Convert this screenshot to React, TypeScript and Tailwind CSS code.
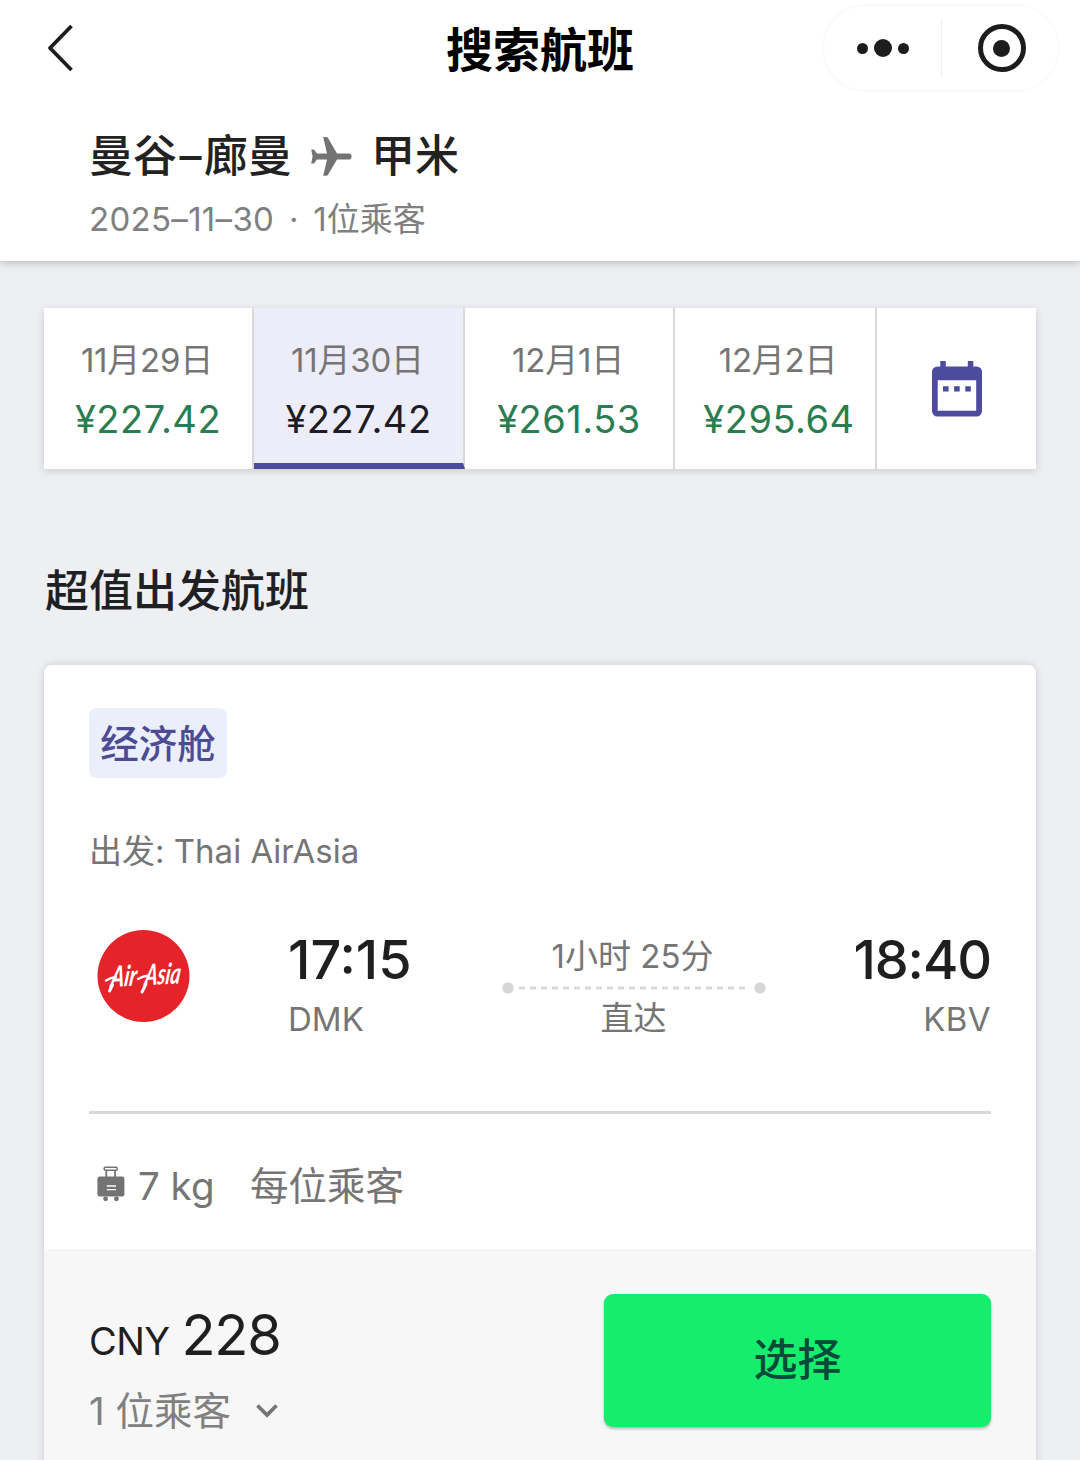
import clsx from "clsx"

const days = [
  { date: "11月29日", price: "¥227.42", width: "w-[210px]" },
  { date: "11月30日", price: "¥227.42", width: "w-[211px]", active: true },
  { date: "12月1日", price: "¥261.53", width: "w-[210px]" },
  { date: "12月2日", price: "¥295.64", width: "w-[202px] pl-2" },
]

function BackIcon() {
  return (
    <svg width="28" height="50" viewBox="0 0 28 50" fill="none" stroke="#1c1c1c" strokeWidth="3.8">
      <path d="M25.5 3 4 25l21.5 22" strokeLinejoin="round" />
    </svg>
  )
}

function PlaneIcon() {
  return (
    <svg width="41" height="39" viewBox="0 0 41 39" fill="#737373">
      <path d="M37.5 16.4H26L17 1Q16.4 0 15.3 0H12.2L16 16.4H6L3.4 13Q3 12.6 2.4 12.6H.2L1.6 19.5.2 26.6H2.4Q3 26.6 3.4 26.1L6 22.6H16L12.2 38.8H15.3Q16.4 38.8 17 37.8L26 22.6H37.5A3.1 3.1 0 0 0 37.5 16.4Z" />
    </svg>
  )
}

function CalendarIcon() {
  return (
    <svg width="50" height="56" viewBox="0 0 50 56" fill="#4c4b9d">
      <path
        fillRule="evenodd"
        d="M8.3 0h5.5v5.5h22V0h5.5v5.5h3.2a5.5 5.5 0 0 1 5.5 5.5v39a5.5 5.5 0 0 1-5.5 5.5h-39A5.5 5.5 0 0 1 0 50V11a5.5 5.5 0 0 1 5.5-5.5h2.8ZM5.7 19.3v30.5h38.5V19.3Z"
      />
      <path d="M11 25.3h5.6v5.2H11Zm11.1 0h5.6v5.2h-5.6Zm11.2 0h5.5v5.2h-5.5Z" />
    </svg>
  )
}

function LuggageIcon() {
  return (
    <svg width="28" height="36" viewBox="0 0 28 36" fill="#737373">
      <rect x="7.2" y="1.2" width="13" height="3" rx="1" fill="none" stroke="#737373" strokeWidth="1.5" />
      <path d="M9.3 4v7M18 4v7" stroke="#737373" strokeWidth="1.8" />
      <rect x="0.4" y="10.6" width="27" height="20" rx="2.4" />
      <path d="M9.8 20h9.2M9.8 23.6h9.2" stroke="#fff" strokeWidth="1.4" />
      <circle cx="8.6" cy="32.8" r="2.4" />
      <circle cx="19.4" cy="32.8" r="2.4" />
    </svg>
  )
}

function AirlineLogo() {
  return (
    <svg width="94" height="94" viewBox="0 0 94 94" className="shrink-0">
      <circle cx="46.5" cy="47" r="46" fill="#e5242a" />
      <g transform="translate(13 58) rotate(-3) skewX(-10)" fill="#fff" fontFamily="Lato" fontWeight="700" fontStyle="italic">
        <text fontSize="29" textLength="26" lengthAdjust="spacingAndGlyphs">
          Air
        </text>
        <text x="34" fontSize="29" textLength="36" lengthAdjust="spacingAndGlyphs">
          Asia
        </text>
      </g>
      <g stroke="#fff" strokeWidth="3" strokeLinecap="round" fill="none">
        <path d="M15.500 56 12.500 62M49 55l-4 8" />
        <path d="M9 51.500q5-3 10-3.500M41 50q5-3 11-3.500" strokeWidth="2.400" />
      </g>
    </svg>
  )
}

function Header() {
  return (
    <header className="relative h-[261px] bg-white shadow-[0_2px_8px_rgba(0,0,0,0.22)]">
      <div className="grid h-24 grid-cols-[1fr_auto_1fr] items-center px-5">
        <div className="pl-[26px]">
          <BackIcon />
        </div>
        <h1 className="pt-1 text-[47px] leading-[60px] font-bold text-black">搜索航班</h1>
        <div className="flex h-[88px] w-[238px] items-center justify-self-end rounded-full border-2 border-[#fafafa]">
          <div className="flex w-[117px] items-center justify-center gap-1.5">
            <span className="size-[11px] rounded-full bg-[#1c1c1c]" />
            <span className="size-[18px] rounded-full bg-[#1c1c1c]" />
            <span className="size-[11px] rounded-full bg-[#1c1c1c]" />
          </div>
          <div className="h-14 w-px bg-[#ececec]" />
          <div className="flex flex-1 items-center justify-center pl-[3px]">
            <div className="flex size-12 items-center justify-center rounded-full border-[5.5px] border-[#1c1c1c]">
              <span className="size-[17px] rounded-full bg-[#1c1c1c]" />
            </div>
          </div>
        </div>
      </div>
      <div className="pt-[31px] pl-[89px]">
        <div className="flex h-[58px] items-center text-[44px] leading-[58px] font-medium text-[#222]">
          <span className="w-[222px] whitespace-nowrap">
            曼谷<span className="px-[2.5px]">–</span>廊曼
          </span>
          <PlaneIcon />
          <span className="ml-[19px]">甲米</span>
        </div>
        <p className="mt-3 text-[33px] leading-[44px] text-[#808080]">
          <span className="tracking-[0.3px]">2025–11–30</span>
          <span className="px-[5.5px]"> · </span>1位乘客
        </p>
      </div>
    </header>
  )
}

function DateStrip() {
  return (
    <div className="mx-[44px] mt-[47px] flex h-[161px] bg-white shadow-[0_2px_8px_rgba(0,0,0,0.15)]">
      {days.map((day) => (
        <div
          key={day.date}
          className={clsx(
            "flex flex-col items-center border-r-2 border-[#d9d9d9] pt-[30px] whitespace-nowrap",
            day.width,
            day.active && "border-b-[6px] border-b-[#4c4b9d] bg-[#ededf9]"
          )}
        >
          <span className="mr-0.5 text-[33px] leading-[44px] tracking-[-0.2px] text-[#757575]">{day.date}</span>
          <span
            className={clsx(
              "mt-[11px] text-[38px] leading-[52px] tracking-[0.5px]",
              day.active ? "text-[#1c1c26]" : "text-[#2b7d51]"
            )}
          >
            {day.price}
          </span>
        </div>
      ))}
      <div className="flex flex-1 items-center justify-center">
        <CalendarIcon />
      </div>
    </div>
  )
}

function FlightCard() {
  return (
    <section className="mx-[44px] mt-11 h-[860px] overflow-hidden rounded-t-lg bg-white shadow-[0_0_8px_rgba(0,0,0,0.15)]">
      <div className="h-[584px] px-[45px] pt-[43px]">
        <div className="flex h-[70px] w-[138px] items-center justify-center rounded-lg bg-[#ebeffc] pt-1 text-[38.5px] font-medium text-[#4c4b93]">
          经济舱
        </div>
        <p className="mt-[51px] text-[33px] leading-[44px] text-[#757575]">出发: Thai AirAsia</p>

        <div className="mt-[50px] flex h-[120px]">
          <div className="w-[199px] pt-[6px] pl-[8px]">
            <AirlineLogo />
          </div>
          <div className="w-[150px]">
            <div className="pt-[5px] text-[54px] leading-[64px] font-medium text-[#1f1f1f]">17:15</div>
            <div className="mt-[5px] text-[33px] leading-[44px] text-[#757575]">DMK</div>
          </div>
          <div className="ml-[64px] flex w-[264px] flex-col items-center text-[33px] leading-[44px] text-[#757575]">
            <span className="mt-[11px] mr-[3px]">1小时 25分</span>
            <svg width="264" height="12" viewBox="0 0 264 12" className="mt-1">
              <circle cx="6" cy="6" r="5.7" fill="#d6d6d6" />
              <path d="M17 6H248" stroke="#d9d9d9" strokeWidth="2.8" strokeDasharray="6 5" />
              <circle cx="258" cy="6" r="5.7" fill="#d6d6d6" />
            </svg>
            <span className="mt-[2px] mr-px">直达</span>
          </div>
          <div className="flex flex-1 flex-col items-end">
            <div className="pt-[5px] text-[54px] leading-[64px] font-medium tracking-[-1.1px] text-[#1f1f1f]">18:40</div>
            <div className="mt-[5px] text-[33px] leading-[44px] tracking-[0.4px] text-[#757575]">KBV</div>
          </div>
        </div>

        <hr className="mt-[68px] border-t-[3px] border-[#d9d9d9]" />
        <div className="mt-[46px] flex h-[52px] items-center pl-2 text-[38.5px] leading-[52px] text-[#757575]">
          <div className="-mt-1">
            <LuggageIcon />
          </div>
          <span className="ml-[13px] w-[112px] whitespace-nowrap">7 kg</span>
          <span>每位乘客</span>
        </div>
      </div>

      <div className="flex h-[276px] justify-between bg-[#f7f7f7] px-[45px] pt-[45px]">
        <div className="text-[#1f1f1f]">
          <div className="flex h-[82px] items-baseline leading-[82px]">
            <span className="text-[38px] tracking-[-0.6px]">CNY</span>
            <span className="ml-3 text-[56px] tracking-[-1.2px]">228</span>
          </div>
          <div className="mt-[9px] flex items-center text-[38.5px] leading-[52px] text-[#808080]">
            <span className="w-[167px] whitespace-nowrap">1 位乘客</span>
            <svg width="22" height="14" viewBox="0 0 22 14" fill="none" stroke="#757575" strokeWidth="3.8">
              <path d="M1.5 1.5 11 11l9.5-9.5" />
            </svg>
          </div>
        </div>
        <button className="h-[133px] w-[387px] rounded-[9px] bg-[#15ee6c] pb-0.5 text-[44px] font-medium text-[#064a3a] shadow-[0_2px_3px_rgba(0,0,0,0.25)]">
          选择
        </button>
      </div>
    </section>
  )
}

export default function App() {
  return (
    <div className="h-[1460px] w-[1080px] overflow-hidden bg-[#edeff3] font-[Inter,'Noto_Sans_CJK_SC',sans-serif]">
      <Header />
      <DateStrip />
      <h2 className="mt-[92px] ml-[45px] text-[44px] leading-[60px] font-medium text-[#1f2024]">超值出发航班</h2>
      <FlightCard />
    </div>
  )
}
